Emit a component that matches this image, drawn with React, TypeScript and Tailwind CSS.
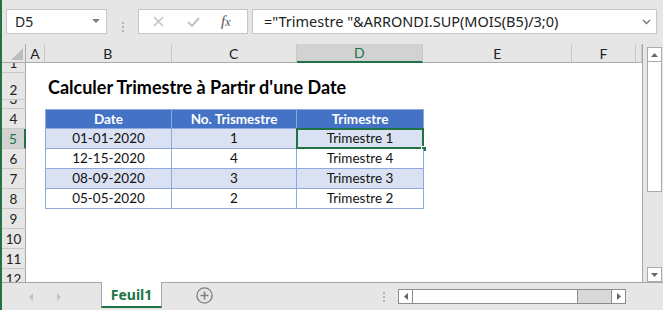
import React from "react";

const cellFont = "font-['Lato',sans-serif]";
const uiFont = "font-['Noto_Sans',sans-serif]";

// column widths: row header, A, B, C, D, E, F, G (cut off)
const cols = [24, 19, 127, 125, 127, 149, 64, 6];
const letters = ["", "A", "B", "C", "D", "E", "F", ""];

const rows: { n: number; h: number }[] = [
  { n: 1, h: 10 },
  { n: 2, h: 27 },
  { n: 3, h: 9 },
  { n: 4, h: 20 },
  { n: 5, h: 20 },
  { n: 6, h: 20 },
  { n: 7, h: 20 },
  { n: 8, h: 20 },
  { n: 9, h: 20 },
  { n: 10, h: 20 },
  { n: 11, h: 20 },
  { n: 12, h: 20 },
];

const data = [
  ["01-01-2020", "1", "Trimestre 1"],
  ["12-15-2020", "4", "Trimestre 4"],
  ["08-09-2020", "3", "Trimestre 3"],
  ["05-05-2020", "2", "Trimestre 2"],
];

const TopBar = () => (
  <div className={`flex h-[44px] pt-[9px] ${uiFont}`}>
    <div className="ml-[4px] flex h-[25px] w-[101px] items-center justify-between border border-[#c6c6c6] bg-white pl-[8px] pr-[6px] text-[14px] text-[#222]">
      <span>D5</span>
      <svg width="8" height="5" viewBox="0 0 8 5">
        <path d="M0 0h8L4 4z" fill="#808080" />
      </svg>
    </div>
    <div className="flex w-[31px] flex-col items-center justify-center gap-[2px]">
      <span className="h-[2px] w-[2px] bg-[#b4b4b4]" />
      <span className="h-[2px] w-[2px] bg-[#b4b4b4]" />
      <span className="h-[2px] w-[2px] bg-[#b4b4b4]" />
    </div>
    <div className="flex h-[25px] w-[110px] items-center border border-[#c6c6c6] bg-white">
      <svg className="ml-[14px]" width="11" height="11" viewBox="0 0 11 11">
        <path d="M1 1l9 9M10 1l-9 9" stroke="#c4c4c4" strokeWidth="1.6" />
      </svg>
      <svg className="ml-[23px]" width="13" height="10" viewBox="0 0 13 10">
        <path d="M1 5l4 4 7-8" stroke="#c4c4c4" strokeWidth="2" fill="none" />
      </svg>
      <span className="ml-[21px] font-['Liberation_Serif',serif] text-[15px] italic text-[#555]">
        f<span className="text-[12px]">x</span>
      </span>
    </div>
    <div className="ml-[4px] flex h-[25px] w-[405px] items-center justify-between border border-[#c6c6c6] bg-white pl-[11px] pr-[5px] text-[14.5px] text-[#222]">
      <span>{'="Trimestre "&ARRONDI.SUP(MOIS(B5)/3;0)'}</span>
      <svg width="9" height="6" viewBox="0 0 9 6">
        <path d="M1 1l3.5 3.5L8 1" stroke="#777" strokeWidth="1.4" fill="none" />
      </svg>
    </div>
  </div>
);

const ColumnHeaders = () => (
  <div className={`flex h-[19px] ${cellFont} text-[14px]`}>
    {cols.map((w, i) => {
      if (i === 0)
        return (
          <div key={i} style={{ width: w }} className="relative border-b border-r border-[#ababab]">
            <svg className="absolute bottom-[2px] right-[2px]" width="12" height="12" viewBox="0 0 12 12">
              <path d="M12 0v12H0z" fill="#bdbdbd" />
            </svg>
          </div>
        );
      const sel = letters[i] === "D";
      return (
        <div
          key={i}
          style={{ width: w }}
          className={`flex items-center justify-center border-r border-[#c8c8c8] ${
            sel
              ? "border-b-2 border-b-[#217346] bg-[#d2d2d2] text-[#217346]"
              : "border-b border-b-[#ababab] text-[#222]"
          }`}
        >
          {letters[i]}
        </div>
      );
    })}
  </div>
);

const RowHeader = ({ n, h }: { n: number; h: number }) => {
  const sel = n === 5;
  return (
    <div
      style={{ height: h }}
      className={`flex w-[24px] shrink-0 items-end justify-center overflow-hidden border-b border-[#c8c8c8] ${
        sel
          ? "border-r-2 border-r-[#217346] bg-[#d2d2d2] text-[#217346]"
          : "border-r border-r-[#ababab] text-[#222]"
      }`}
    >
      <span className="block h-[18px] leading-[18px]">{n}</span>
    </div>
  );
};

const TableCells = ({ n }: { n: number }) => {
  const widths = [127, 125, 127];
  if (n === 4) {
    return (
      <>
        {["Date", "No. Trismestre", "Trimestre"].map((t, i) => (
          <div
            key={t}
            style={{ width: widths[i] }}
            className={`flex items-center justify-center border-b border-r border-t border-[#8ea9db] bg-[#4472c4] font-bold text-white ${
              i === 0 ? "border-l" : ""
            }`}
          >
            {t}
          </div>
        ))}
      </>
    );
  }
  const row = data[n - 5];
  const band = n % 2 === 1;
  return (
    <>
      {row.map((t, i) => (
        <div
          key={i}
          style={{ width: widths[i] }}
          className={`relative flex items-center justify-center border-b border-r border-[#8ea9db] text-[#111] ${
            band ? "bg-[#d9e1f2]" : "bg-white"
          } ${i === 0 ? "border-l" : ""}`}
        >
          {t}
          {n === 5 && i === 2 && (
            <>
              <span className="absolute -bottom-[1px] -left-[1px] -right-[1px] -top-[1px] border-2 border-[#217346]" />
              <span className="absolute -bottom-[4px] -right-[4px] h-[6px] w-[6px] border border-white bg-[#217346]" />
            </>
          )}
        </div>
      ))}
    </>
  );
};

const SheetBody = () => (
  <div className={`h-[219px] overflow-hidden ${cellFont} text-[13.5px]`}>
    {rows.map(({ n, h }) => (
      <div key={n} style={{ height: h }} className="flex">
        <RowHeader n={n} h={h} />
        <div className="flex flex-1 bg-white">
          <div className="w-[19px]" />
          {n === 2 && (
            <div className="flex items-end pb-[2px] pl-[3px] text-[18px] font-bold leading-[22px] whitespace-nowrap text-black">
              Calculer Trimestre à Partir d'une Date
            </div>
          )}
          {n >= 4 && n <= 8 && <TableCells n={n} />}
        </div>
      </div>
    ))}
  </div>
);

const VScroll = () => (
  <div className="flex w-[20px] flex-col pl-[4px] pt-[3px]">
    <div className="flex h-[15px] w-[15px] items-center justify-center border border-[#ababab] bg-white">
      <svg width="7" height="4" viewBox="0 0 7 4">
        <path d="M0 4h7L3.5 0z" fill="#666" />
      </svg>
    </div>
    <div className="h-[130px] w-[15px] border border-t-0 border-[#ababab] bg-white" />
    <div className="flex-1" />
    <div className="flex h-[15px] w-[15px] items-center justify-center border border-[#ababab] bg-white">
      <svg width="7" height="4" viewBox="0 0 7 4">
        <path d="M0 0h7L3.5 4z" fill="#666" />
      </svg>
    </div>
  </div>
);

const TabBar = () => (
  <div className={`flex h-[28px] border-t border-[#a6a6a6] ${uiFont}`}>
    <div className="flex w-[99px] items-center">
      <svg className="ml-[27px]" width="4" height="8" viewBox="0 0 4 8">
        <path d="M4 0v8L0 4z" fill="#c4c4c4" />
      </svg>
      <svg className="ml-[24px]" width="4" height="8" viewBox="0 0 4 8">
        <path d="M0 0v8l4-4z" fill="#c4c4c4" />
      </svg>
    </div>
    <div className="-mt-[1px] flex h-[26px] w-[61px] items-center justify-center border-x border-b-2 border-x-[#a6a6a6] border-b-[#217346] bg-white text-[14px] font-bold text-[#217346]">
      Feuil1
    </div>
    <div className="flex w-[84px] items-center justify-center pb-[2px]">
      <svg width="17" height="17" viewBox="0 0 17 17">
        <circle cx="8.5" cy="8.5" r="7.6" stroke="#808080" strokeWidth="1.4" fill="none" />
        <path d="M8.5 4.5v8M4.5 8.5h8" stroke="#808080" strokeWidth="1.6" />
      </svg>
    </div>
    <div className="flex w-[152px] items-center justify-end pr-[13px]">
      <div className="flex flex-col gap-[2px]">
        <span className="h-[2px] w-[2px] bg-[#b4b4b4]" />
        <span className="h-[2px] w-[2px] bg-[#b4b4b4]" />
        <span className="h-[2px] w-[2px] bg-[#b4b4b4]" />
      </div>
    </div>
    <div className="mt-[6px] flex h-[15px] w-[228px] border border-[#8c8c8c] bg-[#d9d9d9]">
      <div className="flex w-[14px] items-center justify-center border-r border-[#8c8c8c] bg-white">
        <svg width="4" height="7" viewBox="0 0 4 7">
          <path d="M4 0v7L0 3.5z" fill="#666" />
        </svg>
      </div>
      <div className="w-[165px] border-r border-[#8c8c8c] bg-white" />
      <div className="flex-1" />
      <div className="flex w-[14px] items-center justify-center border-l border-[#8c8c8c] bg-white">
        <svg width="4" height="7" viewBox="0 0 4 7">
          <path d="M0 0v7l4-3.5z" fill="#666" />
        </svg>
      </div>
    </div>
  </div>
);

const App = () => {
  return (
    <div className="h-[310px] w-[663px] overflow-hidden border-l-2 border-[#217346] bg-[#e6e6e6]">
      <TopBar />
      <div className="flex h-[238px]">
        <div className="w-[641px] border-r border-[#a6a6a6]">
          <ColumnHeaders />
          <SheetBody />
        </div>
        <VScroll />
      </div>
      <TabBar />
    </div>
  );
};

export default App;
